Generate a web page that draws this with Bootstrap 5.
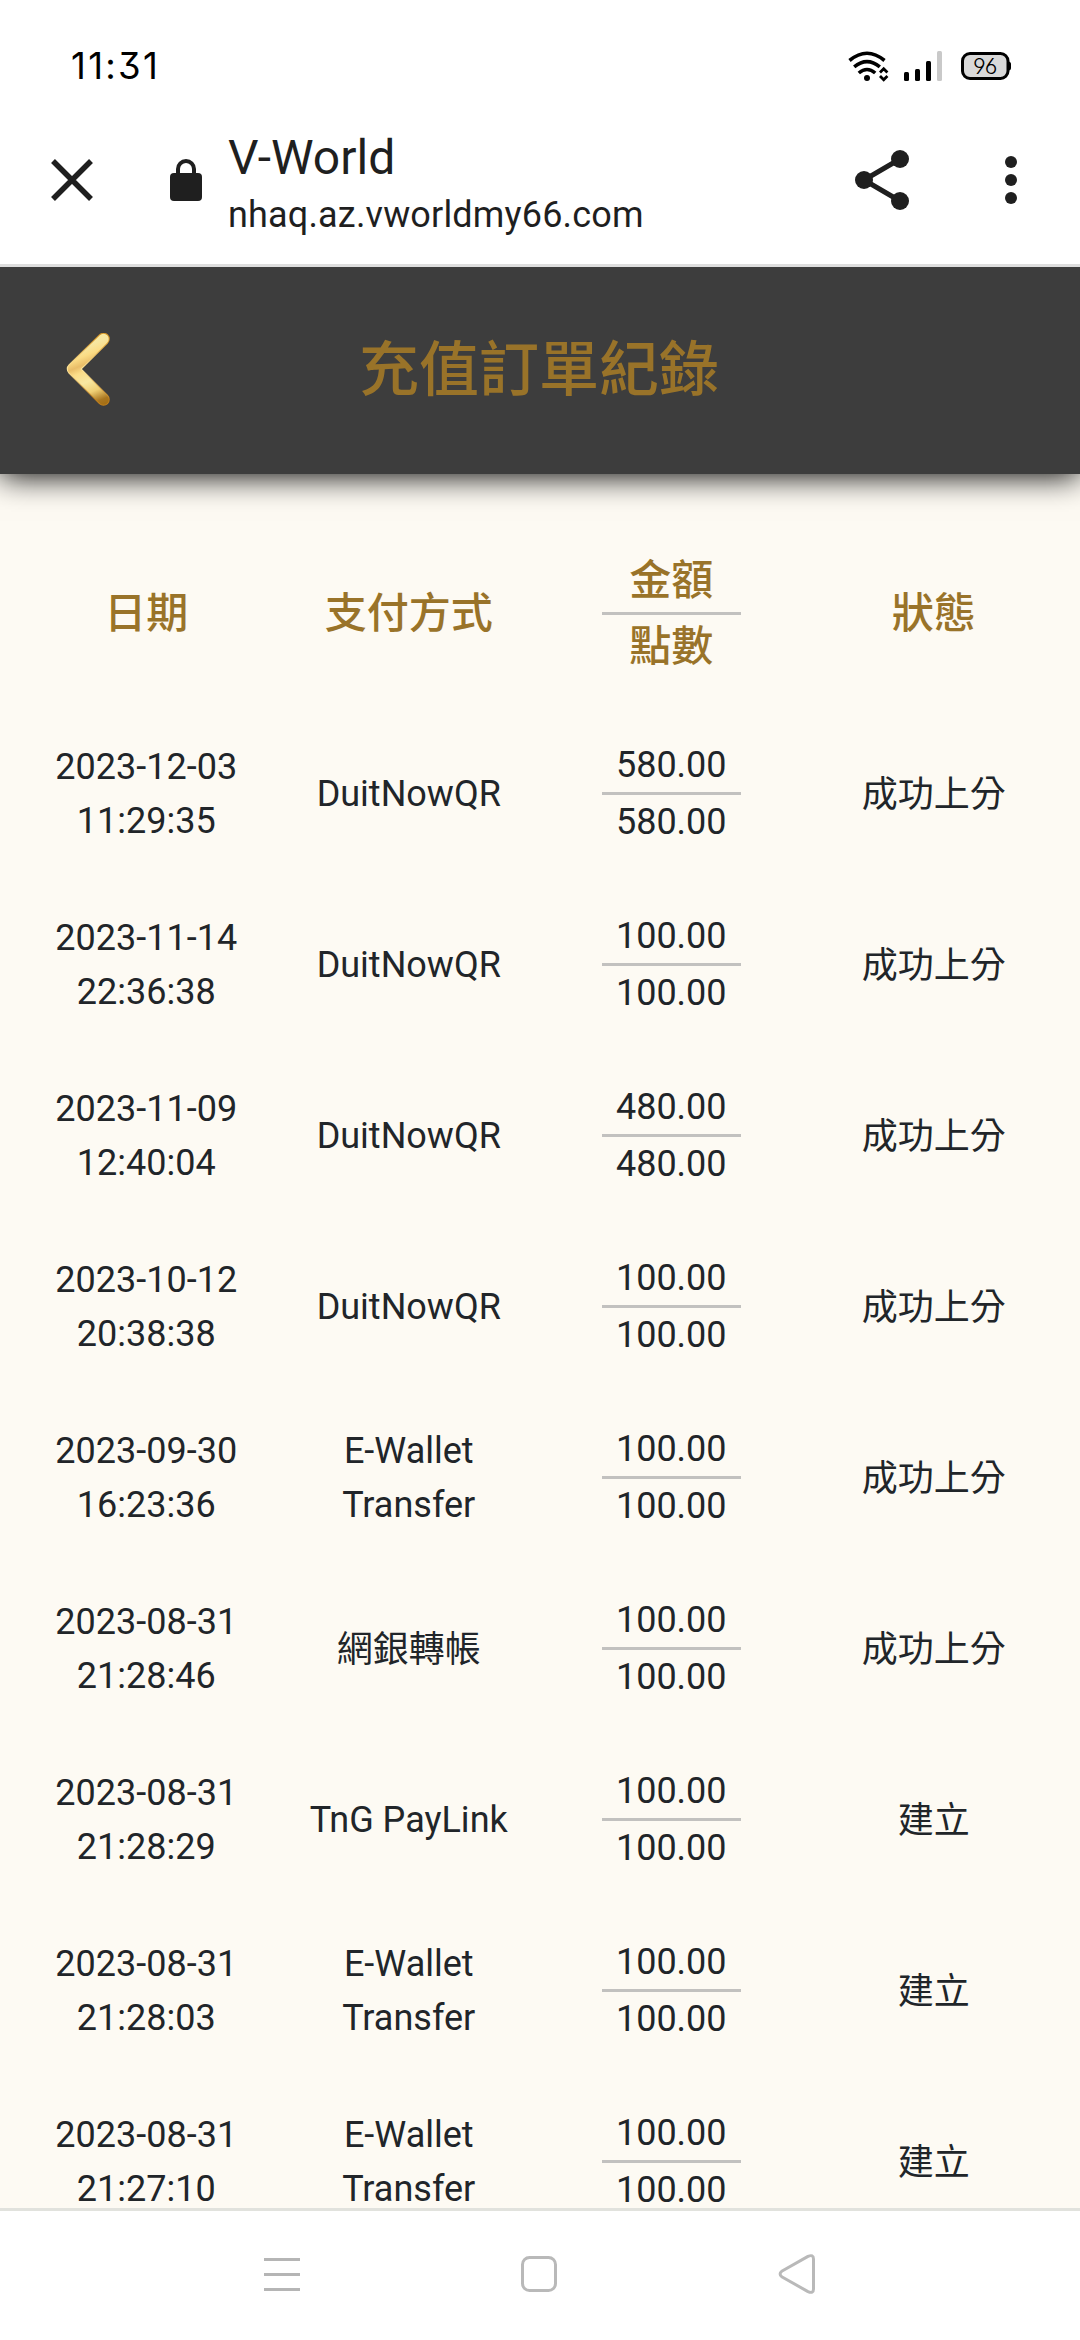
<!DOCTYPE html>
<html lang="zh-Hant">
<head>
<meta charset="utf-8">
<meta name="viewport" content="width=device-width, initial-scale=1">
<title>V-World</title>
<link href="https://cdn.jsdelivr.net/npm/bootstrap@5.3.0/dist/css/bootstrap.min.css" rel="stylesheet">
<style>
  body { font-family: Roboto, "Noto Sans CJK TC", sans-serif; font-size: 36px; line-height: 54px; }
  svg { display: block; flex: none; }
  .phone { width: 1080px; height: 2340px; }
  .status-bar { height: 96px; padding: 36px 69px 0 71px; }
  .clock { font-family: Inter, sans-serif; font-size: 36.5px; line-height: 60px; letter-spacing: 2.3px; font-feature-settings: "cv09"; color: #000; }
  .status-icons { padding-top: 15px; }
  .tab-bar { height: 171px; padding: 0 63px 1px 51px; border-bottom: 3px solid #dedede; color: #1f1f1f; z-index: 2; }
  .site-name { font-size: 48px; line-height: 60px; }
  .site-url { font-size: 36px; line-height: 54px; letter-spacing: .17px; }
  .icon-lock { margin-left: 77px; }
  .address { margin-left: 26px; width: 627px; padding-top: 11px; }
  .icon-more { margin-left: 96px; }
  .app-header { height: 207px; background: #3d3d3d; box-shadow: 0 2px 30px #000; padding: 0 66px; z-index: 1; }
  .app-title { font-size: 60px; line-height: 80px; font-weight: 500; color: #997329; }
  .orders { background: #fdfaf3; padding: 45px 15px 0; flex: 1 1 0; min-height: 0; color: #212529; }
  .order-head { height: 189px; font-size: 42px; line-height: 63px; font-weight: 500; color: #997329; }
  .order-row { height: 171px; }
  .han-cell { padding-top: 2px; }
  .split { width: 139px; }
  .split > :first-child { border-bottom: 3px solid #c2c1bf; }
  .nav-keys { height: 132px; border-top: 3px solid #e1e2dd; padding: 40px 264px 0; }
</style>
<script src="https://cdn.jsdelivr.net/npm/bootstrap@5.3.0/dist/js/bootstrap.bundle.min.js"></script>
</head>
<body>
<div class="phone d-flex flex-column overflow-hidden bg-white">
  <div class="status-bar d-flex justify-content-between align-items-start flex-shrink-0">
    <div class="clock">11:31</div>
    <div class="status-icons">
      <svg width="164" height="32" viewBox="847 51 164 32">
        <g fill="none" stroke="#000" stroke-width="3.600">
          <path d="M849.500 60.500Q867 46 884.500 60.500"/>
          <path d="M854.200 66.800Q867 56.500 879.800 66.800"/>
          <path d="M858.800 73Q867 66 875.200 73"/>
          <path stroke-width="2.800" d="M880 72.500L883.700 68.800L887.400 72.500M880 76L883.700 79.700L887.400 76"/>
        </g>
        <circle cx="867" cy="78" r="3"/>
        <rect x="904" y="72" width="5" height="9" rx="1.500"/>
        <rect x="915" y="69" width="5" height="12" rx="1.500"/>
        <rect x="926" y="61" width="5" height="20" rx="1.500"/>
        <rect x="937" y="51" width="5" height="30" rx="1.500" fill="#c9c9c9"/>
        <rect x="962.500" y="53.500" width="45.500" height="25" rx="7.500" fill="#d9d9d9" stroke="#000" stroke-width="3"/>
        <path d="M1008 61.500q3 0 3 2.500v4q0 2.500-3 2.500z"/>
        <text x="985" y="73.500" text-anchor="middle" font-family="Inter, sans-serif" font-size="22" font-weight="300" letter-spacing="-.5" style="font-feature-settings:'cv03','cv04'">96</text>
      </svg>
    </div>
  </div>

  <div class="tab-bar d-flex align-items-center flex-shrink-0 position-relative bg-white">
    <svg width="42" height="42" viewBox="0 0 42 42"><path d="M2 2L40 40M40 2L2 40" stroke="#1f1f1f" stroke-width="5.500"/></svg>
    <svg class="icon-lock" width="32" height="42" viewBox="0 0 32 42"><rect y="14" width="32" height="28" rx="4" fill="#1f1f1f"/><path d="M8 16V10a8 8 0 0 1 16 0V16" fill="none" stroke="#1f1f1f" stroke-width="4"/></svg>
    <div class="address d-flex flex-column">
      <div class="site-name">V-World</div>
      <div class="site-url">nhaq.az.vworldmy66.com</div>
    </div>
    <svg width="54" height="60" viewBox="0 0 54 60"><path d="M45 9L9 30L45 51" fill="none" stroke="#1f1f1f" stroke-width="5"/><g fill="#1f1f1f"><circle cx="9" cy="30" r="9"/><circle cx="45" cy="9" r="9"/><circle cx="45" cy="51" r="9"/></g></svg>
    <svg class="icon-more" width="12" height="48" viewBox="0 0 12 48" fill="#1f1f1f"><circle cx="6" cy="6" r="6"/><circle cx="6" cy="24" r="6"/><circle cx="6" cy="42" r="6"/></svg>
  </div>

  <header class="app-header d-flex align-items-center justify-content-between flex-shrink-0 position-relative">
    <svg width="46" height="76" viewBox="0 0 46 76">
      <defs>
        <linearGradient id="goldBody" gradientUnits="userSpaceOnUse" x1="4" y1="2" x2="34" y2="74">
          <stop offset="0" stop-color="#fcec9c"/><stop offset=".22" stop-color="#f7e6a0"/><stop offset=".32" stop-color="#fbdc85"/><stop offset=".42" stop-color="#e9bd68"/><stop offset=".5" stop-color="#fbdc88"/><stop offset=".64" stop-color="#f8e8a2"/><stop offset=".78" stop-color="#efcf74"/><stop offset=".92" stop-color="#a97620"/><stop offset="1" stop-color="#a36d12"/>
        </linearGradient>
        <linearGradient id="goldEdge" x1="0" y1="0" x2="0" y2="1"><stop offset="0" stop-color="#d39426"/><stop offset=".5" stop-color="#ffe9a0"/><stop offset="1" stop-color="#c07f1c"/></linearGradient>
      </defs>
      <g fill="none" stroke-linecap="round" stroke-linejoin="round">
        <path d="M37.500 6L7 36L37.500 66.500" stroke="url(#goldEdge)" stroke-width="12.500"/>
        <path d="M37.500 6L7 36L37.500 66.500" stroke="url(#goldBody)" stroke-width="10.500"/>
      </g>
    </svg>
    <h1 class="app-title m-0">充值訂單紀錄</h1>
    <span class="px-4"></span>
  </header>

  <main class="orders overflow-hidden text-center">
    <div class="order-head row g-0 align-items-center">
      <div class="col-3">日期</div><div class="col-3">支付方式</div>
      <div class="col-3"><div class="split mx-auto"><div>金額</div><div>點數</div></div></div>
      <div class="col-3">狀態</div>
    </div>
    <div class="order-row row g-0 align-items-center">
      <div class="col-3">2023-12-03<br>11:29:35</div><div class="col-3">DuitNowQR</div>
      <div class="col-3"><div class="split mx-auto"><div>580.00</div><div>580.00</div></div></div>
      <div class="col-3 han-cell">成功上分</div>
    </div>
    <div class="order-row row g-0 align-items-center">
      <div class="col-3">2023-11-14<br>22:36:38</div><div class="col-3">DuitNowQR</div>
      <div class="col-3"><div class="split mx-auto"><div>100.00</div><div>100.00</div></div></div>
      <div class="col-3 han-cell">成功上分</div>
    </div>
    <div class="order-row row g-0 align-items-center">
      <div class="col-3">2023-11-09<br>12:40:04</div><div class="col-3">DuitNowQR</div>
      <div class="col-3"><div class="split mx-auto"><div>480.00</div><div>480.00</div></div></div>
      <div class="col-3 han-cell">成功上分</div>
    </div>
    <div class="order-row row g-0 align-items-center">
      <div class="col-3">2023-10-12<br>20:38:38</div><div class="col-3">DuitNowQR</div>
      <div class="col-3"><div class="split mx-auto"><div>100.00</div><div>100.00</div></div></div>
      <div class="col-3 han-cell">成功上分</div>
    </div>
    <div class="order-row row g-0 align-items-center">
      <div class="col-3">2023-09-30<br>16:23:36</div><div class="col-3">E-Wallet<br>Transfer</div>
      <div class="col-3"><div class="split mx-auto"><div>100.00</div><div>100.00</div></div></div>
      <div class="col-3 han-cell">成功上分</div>
    </div>
    <div class="order-row row g-0 align-items-center">
      <div class="col-3">2023-08-31<br>21:28:46</div><div class="col-3 han-cell">網銀轉帳</div>
      <div class="col-3"><div class="split mx-auto"><div>100.00</div><div>100.00</div></div></div>
      <div class="col-3 han-cell">成功上分</div>
    </div>
    <div class="order-row row g-0 align-items-center">
      <div class="col-3">2023-08-31<br>21:28:29</div><div class="col-3">TnG PayLink</div>
      <div class="col-3"><div class="split mx-auto"><div>100.00</div><div>100.00</div></div></div>
      <div class="col-3 han-cell">建立</div>
    </div>
    <div class="order-row row g-0 align-items-center">
      <div class="col-3">2023-08-31<br>21:28:03</div><div class="col-3">E-Wallet<br>Transfer</div>
      <div class="col-3"><div class="split mx-auto"><div>100.00</div><div>100.00</div></div></div>
      <div class="col-3 han-cell">建立</div>
    </div>
    <div class="order-row row g-0 align-items-center">
      <div class="col-3">2023-08-31<br>21:27:10</div><div class="col-3">E-Wallet<br>Transfer</div>
      <div class="col-3"><div class="split mx-auto"><div>100.00</div><div>100.00</div></div></div>
      <div class="col-3 han-cell">建立</div>
    </div>
  </main>

  <nav class="nav-keys d-flex justify-content-between bg-white flex-shrink-0">
    <svg width="36" height="46" viewBox="0 0 36 46" fill="#b5b5b5"><rect y="7" width="36" height="3"/><rect y="22" width="36" height="3"/><rect y="37" width="36" height="3"/></svg>
    <svg width="36" height="46" viewBox="0 0 36 46"><rect x="1.500" y="6.500" width="33" height="33" rx="7" fill="none" stroke="#b9b9b9" stroke-width="3"/></svg>
    <svg width="38" height="46" viewBox="0 0 38 46"><path d="M30 5.400L3.700 20.300Q.500 23 3.700 25.700L30 40.600Q35.500 43 35.500 38V8Q35.500 3 30 5.400Z" fill="none" stroke="#b9b9b9" stroke-width="3" stroke-linejoin="round"/></svg>
  </nav>
</div>
</body>
</html>
